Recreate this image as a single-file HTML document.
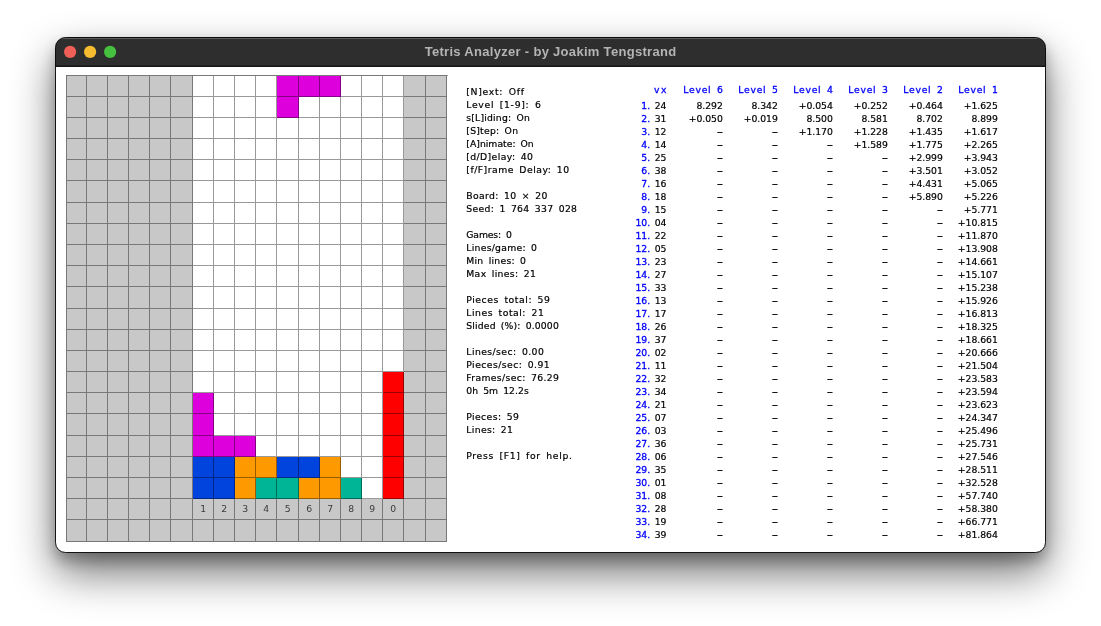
<!DOCTYPE html>
<html lang="en"><head><meta charset="utf-8"><title>Tetris Analyzer - by Joakim Tengstrand</title>
<style>
html,body{margin:0;padding:0;background:#fff;}
body{width:1101px;height:626px;overflow:hidden;position:relative;}
svg{position:absolute;left:0;top:0;display:block;will-change:transform;}
.t{font-family:"DejaVu Sans","Liberation Sans",sans-serif;font-size:9.25px;fill:#000;stroke:#000;stroke-width:0.2px;font-variant-ligatures:none;}
.b{fill:#0000ff;stroke:#0000ff;stroke-width:0.3px;}
.w{word-spacing:2px;}
.n{fill:#3a3a3a;stroke:none;}
.title{font-family:"Liberation Sans",sans-serif;font-weight:bold;font-size:13px;fill:#b4b4b4;}
</style></head><body>
<svg width="1101" height="626" viewBox="0 0 1101 626">
<defs>
<filter id="sh" x="-20%" y="-30%" width="140%" height="170%"><feGaussianBlur stdDeviation="22"/></filter>
<filter id="sh2" x="-10%" y="-10%" width="120%" height="120%"><feGaussianBlur stdDeviation="7"/></filter>
<clipPath id="win"><rect x="55.5" y="37.5" width="990" height="515" rx="10" ry="10"/></clipPath>
</defs>
<rect x="55" y="57" width="991" height="516" rx="10" fill="#000" opacity="0.55" filter="url(#sh)"/>
<rect x="55" y="45" width="991" height="516" rx="10" fill="#000" opacity="0.25" filter="url(#sh2)"/>
<rect x="55.5" y="37.5" width="990" height="515" rx="10" ry="10" fill="#fff"/>
<g clip-path="url(#win)">
<rect x="50" y="30" width="1000" height="36.5" fill="#2e2e2e"/>
<rect x="50" y="38" width="1000" height="1" fill="#fff" opacity="0.22"/>
<rect x="50" y="65.75" width="1000" height="1.1" fill="#000"/>
</g>
<rect x="55.5" y="37.5" width="990" height="515" rx="10" ry="10" fill="none" stroke="#000" stroke-opacity="0.9" stroke-width="1"/>
<circle cx="70.1" cy="51.9" r="6.1" fill="#ee5f57"/>
<circle cx="90.1" cy="51.9" r="6.1" fill="#f6bc30"/>
<circle cx="110.1" cy="51.9" r="6.1" fill="#45c13f"/>
<text class="title" x="550.4" y="56.4" text-anchor="middle" textLength="251.5" lengthAdjust="spacing">Tetris Analyzer - by Joakim Tengstrand</text>
<g shape-rendering="crispEdges">
<rect x="66" y="75" width="381" height="467" fill="#c8c8c8"/>
<rect x="193" y="76" width="211" height="423" fill="#fff"/>
<rect x="277" y="76" width="22" height="21" fill="#dd00dd"/>
<rect x="299" y="76" width="21" height="21" fill="#dd00dd"/>
<rect x="320" y="76" width="21" height="21" fill="#dd00dd"/>
<rect x="277" y="97" width="22" height="21" fill="#dd00dd"/>
<rect x="383" y="372" width="21" height="21" fill="#ff0000"/>
<rect x="193" y="393" width="21" height="21" fill="#dd00dd"/>
<rect x="383" y="393" width="21" height="21" fill="#ff0000"/>
<rect x="193" y="414" width="21" height="22" fill="#dd00dd"/>
<rect x="383" y="414" width="21" height="22" fill="#ff0000"/>
<rect x="193" y="436" width="21" height="21" fill="#dd00dd"/>
<rect x="214" y="436" width="21" height="21" fill="#dd00dd"/>
<rect x="235" y="436" width="21" height="21" fill="#dd00dd"/>
<rect x="383" y="436" width="21" height="21" fill="#ff0000"/>
<rect x="193" y="457" width="21" height="21" fill="#0044dd"/>
<rect x="214" y="457" width="21" height="21" fill="#0044dd"/>
<rect x="235" y="457" width="21" height="21" fill="#ff9900"/>
<rect x="256" y="457" width="21" height="21" fill="#ff9900"/>
<rect x="277" y="457" width="22" height="21" fill="#0044dd"/>
<rect x="299" y="457" width="21" height="21" fill="#0044dd"/>
<rect x="320" y="457" width="21" height="21" fill="#ff9900"/>
<rect x="383" y="457" width="21" height="21" fill="#ff0000"/>
<rect x="193" y="478" width="21" height="21" fill="#0044dd"/>
<rect x="214" y="478" width="21" height="21" fill="#0044dd"/>
<rect x="235" y="478" width="21" height="21" fill="#ff9900"/>
<rect x="256" y="478" width="21" height="21" fill="#00b496"/>
<rect x="277" y="478" width="22" height="21" fill="#00b496"/>
<rect x="299" y="478" width="21" height="21" fill="#ff9900"/>
<rect x="320" y="478" width="21" height="21" fill="#ff9900"/>
<rect x="341" y="478" width="21" height="21" fill="#00b496"/>
<rect x="383" y="478" width="21" height="21" fill="#ff0000"/>
<path fill="#000" fill-opacity="0.4" d="M66 75h1v467h-1zM86 75h1v467h-1zM107 75h1v467h-1zM128 75h1v467h-1zM149 75h1v467h-1zM170 75h1v467h-1zM192 75h1v467h-1zM213 75h1v467h-1zM234 75h1v467h-1zM255 75h1v467h-1zM276 75h1v467h-1zM298 75h1v467h-1zM319 75h1v467h-1zM340 75h1v467h-1zM361 75h1v467h-1zM382 75h1v467h-1zM403 75h1v467h-1zM425 75h1v467h-1zM446 75h1v467h-1zM447 75h1v1h-1z"/>
<path fill="#000" fill-opacity="0.4" d="M67 75h19v1h-19zM87 75h20v1h-20zM108 75h20v1h-20zM129 75h20v1h-20zM150 75h20v1h-20zM171 75h21v1h-21zM193 75h20v1h-20zM214 75h20v1h-20zM235 75h20v1h-20zM256 75h20v1h-20zM277 75h21v1h-21zM299 75h20v1h-20zM320 75h20v1h-20zM341 75h20v1h-20zM362 75h20v1h-20zM383 75h20v1h-20zM404 75h21v1h-21zM426 75h20v1h-20zM67 96h19v1h-19zM87 96h20v1h-20zM108 96h20v1h-20zM129 96h20v1h-20zM150 96h20v1h-20zM171 96h21v1h-21zM193 96h20v1h-20zM214 96h20v1h-20zM235 96h20v1h-20zM256 96h20v1h-20zM277 96h21v1h-21zM299 96h20v1h-20zM320 96h20v1h-20zM341 96h20v1h-20zM362 96h20v1h-20zM383 96h20v1h-20zM404 96h21v1h-21zM426 96h20v1h-20zM67 117h19v1h-19zM87 117h20v1h-20zM108 117h20v1h-20zM129 117h20v1h-20zM150 117h20v1h-20zM171 117h21v1h-21zM193 117h20v1h-20zM214 117h20v1h-20zM235 117h20v1h-20zM256 117h20v1h-20zM277 117h21v1h-21zM299 117h20v1h-20zM320 117h20v1h-20zM341 117h20v1h-20zM362 117h20v1h-20zM383 117h20v1h-20zM404 117h21v1h-21zM426 117h20v1h-20zM67 138h19v1h-19zM87 138h20v1h-20zM108 138h20v1h-20zM129 138h20v1h-20zM150 138h20v1h-20zM171 138h21v1h-21zM193 138h20v1h-20zM214 138h20v1h-20zM235 138h20v1h-20zM256 138h20v1h-20zM277 138h21v1h-21zM299 138h20v1h-20zM320 138h20v1h-20zM341 138h20v1h-20zM362 138h20v1h-20zM383 138h20v1h-20zM404 138h21v1h-21zM426 138h20v1h-20zM67 159h19v1h-19zM87 159h20v1h-20zM108 159h20v1h-20zM129 159h20v1h-20zM150 159h20v1h-20zM171 159h21v1h-21zM193 159h20v1h-20zM214 159h20v1h-20zM235 159h20v1h-20zM256 159h20v1h-20zM277 159h21v1h-21zM299 159h20v1h-20zM320 159h20v1h-20zM341 159h20v1h-20zM362 159h20v1h-20zM383 159h20v1h-20zM404 159h21v1h-21zM426 159h20v1h-20zM67 180h19v1h-19zM87 180h20v1h-20zM108 180h20v1h-20zM129 180h20v1h-20zM150 180h20v1h-20zM171 180h21v1h-21zM193 180h20v1h-20zM214 180h20v1h-20zM235 180h20v1h-20zM256 180h20v1h-20zM277 180h21v1h-21zM299 180h20v1h-20zM320 180h20v1h-20zM341 180h20v1h-20zM362 180h20v1h-20zM383 180h20v1h-20zM404 180h21v1h-21zM426 180h20v1h-20zM67 202h19v1h-19zM87 202h20v1h-20zM108 202h20v1h-20zM129 202h20v1h-20zM150 202h20v1h-20zM171 202h21v1h-21zM193 202h20v1h-20zM214 202h20v1h-20zM235 202h20v1h-20zM256 202h20v1h-20zM277 202h21v1h-21zM299 202h20v1h-20zM320 202h20v1h-20zM341 202h20v1h-20zM362 202h20v1h-20zM383 202h20v1h-20zM404 202h21v1h-21zM426 202h20v1h-20zM67 223h19v1h-19zM87 223h20v1h-20zM108 223h20v1h-20zM129 223h20v1h-20zM150 223h20v1h-20zM171 223h21v1h-21zM193 223h20v1h-20zM214 223h20v1h-20zM235 223h20v1h-20zM256 223h20v1h-20zM277 223h21v1h-21zM299 223h20v1h-20zM320 223h20v1h-20zM341 223h20v1h-20zM362 223h20v1h-20zM383 223h20v1h-20zM404 223h21v1h-21zM426 223h20v1h-20zM67 244h19v1h-19zM87 244h20v1h-20zM108 244h20v1h-20zM129 244h20v1h-20zM150 244h20v1h-20zM171 244h21v1h-21zM193 244h20v1h-20zM214 244h20v1h-20zM235 244h20v1h-20zM256 244h20v1h-20zM277 244h21v1h-21zM299 244h20v1h-20zM320 244h20v1h-20zM341 244h20v1h-20zM362 244h20v1h-20zM383 244h20v1h-20zM404 244h21v1h-21zM426 244h20v1h-20zM67 265h19v1h-19zM87 265h20v1h-20zM108 265h20v1h-20zM129 265h20v1h-20zM150 265h20v1h-20zM171 265h21v1h-21zM193 265h20v1h-20zM214 265h20v1h-20zM235 265h20v1h-20zM256 265h20v1h-20zM277 265h21v1h-21zM299 265h20v1h-20zM320 265h20v1h-20zM341 265h20v1h-20zM362 265h20v1h-20zM383 265h20v1h-20zM404 265h21v1h-21zM426 265h20v1h-20zM67 286h19v1h-19zM87 286h20v1h-20zM108 286h20v1h-20zM129 286h20v1h-20zM150 286h20v1h-20zM171 286h21v1h-21zM193 286h20v1h-20zM214 286h20v1h-20zM235 286h20v1h-20zM256 286h20v1h-20zM277 286h21v1h-21zM299 286h20v1h-20zM320 286h20v1h-20zM341 286h20v1h-20zM362 286h20v1h-20zM383 286h20v1h-20zM404 286h21v1h-21zM426 286h20v1h-20zM67 308h19v1h-19zM87 308h20v1h-20zM108 308h20v1h-20zM129 308h20v1h-20zM150 308h20v1h-20zM171 308h21v1h-21zM193 308h20v1h-20zM214 308h20v1h-20zM235 308h20v1h-20zM256 308h20v1h-20zM277 308h21v1h-21zM299 308h20v1h-20zM320 308h20v1h-20zM341 308h20v1h-20zM362 308h20v1h-20zM383 308h20v1h-20zM404 308h21v1h-21zM426 308h20v1h-20zM67 329h19v1h-19zM87 329h20v1h-20zM108 329h20v1h-20zM129 329h20v1h-20zM150 329h20v1h-20zM171 329h21v1h-21zM193 329h20v1h-20zM214 329h20v1h-20zM235 329h20v1h-20zM256 329h20v1h-20zM277 329h21v1h-21zM299 329h20v1h-20zM320 329h20v1h-20zM341 329h20v1h-20zM362 329h20v1h-20zM383 329h20v1h-20zM404 329h21v1h-21zM426 329h20v1h-20zM67 350h19v1h-19zM87 350h20v1h-20zM108 350h20v1h-20zM129 350h20v1h-20zM150 350h20v1h-20zM171 350h21v1h-21zM193 350h20v1h-20zM214 350h20v1h-20zM235 350h20v1h-20zM256 350h20v1h-20zM277 350h21v1h-21zM299 350h20v1h-20zM320 350h20v1h-20zM341 350h20v1h-20zM362 350h20v1h-20zM383 350h20v1h-20zM404 350h21v1h-21zM426 350h20v1h-20zM67 371h19v1h-19zM87 371h20v1h-20zM108 371h20v1h-20zM129 371h20v1h-20zM150 371h20v1h-20zM171 371h21v1h-21zM193 371h20v1h-20zM214 371h20v1h-20zM235 371h20v1h-20zM256 371h20v1h-20zM277 371h21v1h-21zM299 371h20v1h-20zM320 371h20v1h-20zM341 371h20v1h-20zM362 371h20v1h-20zM383 371h20v1h-20zM404 371h21v1h-21zM426 371h20v1h-20zM67 392h19v1h-19zM87 392h20v1h-20zM108 392h20v1h-20zM129 392h20v1h-20zM150 392h20v1h-20zM171 392h21v1h-21zM193 392h20v1h-20zM214 392h20v1h-20zM235 392h20v1h-20zM256 392h20v1h-20zM277 392h21v1h-21zM299 392h20v1h-20zM320 392h20v1h-20zM341 392h20v1h-20zM362 392h20v1h-20zM383 392h20v1h-20zM404 392h21v1h-21zM426 392h20v1h-20zM67 413h19v1h-19zM87 413h20v1h-20zM108 413h20v1h-20zM129 413h20v1h-20zM150 413h20v1h-20zM171 413h21v1h-21zM193 413h20v1h-20zM214 413h20v1h-20zM235 413h20v1h-20zM256 413h20v1h-20zM277 413h21v1h-21zM299 413h20v1h-20zM320 413h20v1h-20zM341 413h20v1h-20zM362 413h20v1h-20zM383 413h20v1h-20zM404 413h21v1h-21zM426 413h20v1h-20zM67 435h19v1h-19zM87 435h20v1h-20zM108 435h20v1h-20zM129 435h20v1h-20zM150 435h20v1h-20zM171 435h21v1h-21zM193 435h20v1h-20zM214 435h20v1h-20zM235 435h20v1h-20zM256 435h20v1h-20zM277 435h21v1h-21zM299 435h20v1h-20zM320 435h20v1h-20zM341 435h20v1h-20zM362 435h20v1h-20zM383 435h20v1h-20zM404 435h21v1h-21zM426 435h20v1h-20zM67 456h19v1h-19zM87 456h20v1h-20zM108 456h20v1h-20zM129 456h20v1h-20zM150 456h20v1h-20zM171 456h21v1h-21zM193 456h20v1h-20zM214 456h20v1h-20zM235 456h20v1h-20zM256 456h20v1h-20zM277 456h21v1h-21zM299 456h20v1h-20zM320 456h20v1h-20zM341 456h20v1h-20zM362 456h20v1h-20zM383 456h20v1h-20zM404 456h21v1h-21zM426 456h20v1h-20zM67 477h19v1h-19zM87 477h20v1h-20zM108 477h20v1h-20zM129 477h20v1h-20zM150 477h20v1h-20zM171 477h21v1h-21zM193 477h20v1h-20zM214 477h20v1h-20zM235 477h20v1h-20zM256 477h20v1h-20zM277 477h21v1h-21zM299 477h20v1h-20zM320 477h20v1h-20zM341 477h20v1h-20zM362 477h20v1h-20zM383 477h20v1h-20zM404 477h21v1h-21zM426 477h20v1h-20zM67 498h19v1h-19zM87 498h20v1h-20zM108 498h20v1h-20zM129 498h20v1h-20zM150 498h20v1h-20zM171 498h21v1h-21zM193 498h20v1h-20zM214 498h20v1h-20zM235 498h20v1h-20zM256 498h20v1h-20zM277 498h21v1h-21zM299 498h20v1h-20zM320 498h20v1h-20zM341 498h20v1h-20zM362 498h20v1h-20zM383 498h20v1h-20zM404 498h21v1h-21zM426 498h20v1h-20zM67 519h19v1h-19zM87 519h20v1h-20zM108 519h20v1h-20zM129 519h20v1h-20zM150 519h20v1h-20zM171 519h21v1h-21zM193 519h20v1h-20zM214 519h20v1h-20zM235 519h20v1h-20zM256 519h20v1h-20zM277 519h21v1h-21zM299 519h20v1h-20zM320 519h20v1h-20zM341 519h20v1h-20zM362 519h20v1h-20zM383 519h20v1h-20zM404 519h21v1h-21zM426 519h20v1h-20zM67 541h19v1h-19zM87 541h20v1h-20zM108 541h20v1h-20zM129 541h20v1h-20zM150 541h20v1h-20zM171 541h21v1h-21zM193 541h20v1h-20zM214 541h20v1h-20zM235 541h20v1h-20zM256 541h20v1h-20zM277 541h21v1h-21zM299 541h20v1h-20zM320 541h20v1h-20zM341 541h20v1h-20zM362 541h20v1h-20zM383 541h20v1h-20zM404 541h21v1h-21zM426 541h20v1h-20z"/>
</g>
<text class="t n" x="203.3" y="512" text-anchor="middle">1</text>
<text class="t n" x="224.3" y="512" text-anchor="middle">2</text>
<text class="t n" x="245.3" y="512" text-anchor="middle">3</text>
<text class="t n" x="266.3" y="512" text-anchor="middle">4</text>
<text class="t n" x="287.8" y="512" text-anchor="middle">5</text>
<text class="t n" x="309.3" y="512" text-anchor="middle">6</text>
<text class="t n" x="330.3" y="512" text-anchor="middle">7</text>
<text class="t n" x="351.3" y="512" text-anchor="middle">8</text>
<text class="t n" x="372.3" y="512" text-anchor="middle">9</text>
<text class="t n" x="393.3" y="512" text-anchor="middle">0</text>
<text class="t w" x="466.3" y="95" textLength="57.7" lengthAdjust="spacing" xml:space="preserve">[N]ext: Off</text>
<text class="t w" x="466.3" y="108" textLength="74.5" lengthAdjust="spacing" xml:space="preserve">Level [1-9]: 6</text>
<text class="t w" x="466.3" y="121" textLength="63.5" lengthAdjust="spacing" xml:space="preserve">s[L]iding: On</text>
<text class="t w" x="466.3" y="134" textLength="51.7" lengthAdjust="spacing" xml:space="preserve">[S]tep: On</text>
<text class="t w" x="466.3" y="147" textLength="67.4" lengthAdjust="spacing" xml:space="preserve">[A]nimate: On</text>
<text class="t w" x="466.3" y="160" textLength="66.7" lengthAdjust="spacing" xml:space="preserve">[d/D]elay: 40</text>
<text class="t w" x="466.3" y="173" textLength="102.8" lengthAdjust="spacing" xml:space="preserve">[f/F]rame Delay: 10</text>
<text class="t w" x="466.3" y="199" textLength="81" lengthAdjust="spacing" xml:space="preserve">Board: 10 × 20</text>
<text class="t w" x="466.3" y="212" textLength="110.7" lengthAdjust="spacing" xml:space="preserve">Seed: 1 764 337 028</text>
<text class="t w" x="466.3" y="238" textLength="45.5" lengthAdjust="spacing" xml:space="preserve">Games: 0</text>
<text class="t w" x="466.3" y="251" textLength="70.6" lengthAdjust="spacing" xml:space="preserve">Lines/game: 0</text>
<text class="t w" x="466.3" y="264" textLength="59.7" lengthAdjust="spacing" xml:space="preserve">Min lines: 0</text>
<text class="t w" x="466.3" y="277" textLength="69.6" lengthAdjust="spacing" xml:space="preserve">Max lines: 21</text>
<text class="t w" x="466.3" y="303" textLength="83.6" lengthAdjust="spacing" xml:space="preserve">Pieces total: 59</text>
<text class="t w" x="466.3" y="316" textLength="77.5" lengthAdjust="spacing" xml:space="preserve">Lines total: 21</text>
<text class="t w" x="466.3" y="329" textLength="92.5" lengthAdjust="spacing" xml:space="preserve">Slided (%): 0.0000</text>
<text class="t w" x="466.3" y="355" textLength="77.5" lengthAdjust="spacing" xml:space="preserve">Lines/sec: 0.00</text>
<text class="t w" x="466.3" y="368" textLength="83.3" lengthAdjust="spacing" xml:space="preserve">Pieces/sec: 0.91</text>
<text class="t w" x="466.3" y="381" textLength="92.5" lengthAdjust="spacing" xml:space="preserve">Frames/sec: 76.29</text>
<text class="t w" x="466.3" y="394" textLength="62.5" lengthAdjust="spacing" xml:space="preserve">0h 5m 12.2s</text>
<text class="t w" x="466.3" y="420" textLength="52.6" lengthAdjust="spacing" xml:space="preserve">Pieces: 59</text>
<text class="t w" x="466.3" y="433" textLength="46.6" lengthAdjust="spacing" xml:space="preserve">Lines: 21</text>
<text class="t w" x="466.3" y="459" textLength="105.6" lengthAdjust="spacing" xml:space="preserve">Press [F1] for help.</text>
<text class="t b" x="666.4" y="93.2" text-anchor="end" textLength="12.3" lengthAdjust="spacing">vx</text>
<text class="t b w" x="722.9" y="93.2" text-anchor="end" textLength="39.6" lengthAdjust="spacing" xml:space="preserve">Level 6</text>
<text class="t b w" x="777.9" y="93.2" text-anchor="end" textLength="39.6" lengthAdjust="spacing" xml:space="preserve">Level 5</text>
<text class="t b w" x="832.9" y="93.2" text-anchor="end" textLength="39.6" lengthAdjust="spacing" xml:space="preserve">Level 4</text>
<text class="t b w" x="887.9" y="93.2" text-anchor="end" textLength="39.6" lengthAdjust="spacing" xml:space="preserve">Level 3</text>
<text class="t b w" x="942.9" y="93.2" text-anchor="end" textLength="39.6" lengthAdjust="spacing" xml:space="preserve">Level 2</text>
<text class="t b w" x="997.9" y="93.2" text-anchor="end" textLength="39.6" lengthAdjust="spacing" xml:space="preserve">Level 1</text>
<text class="t b" x="650.2" y="108.6" text-anchor="end">1.</text>
<text class="t" x="666.5" y="108.6" text-anchor="end">24</text>
<text class="t" x="722.9" y="108.6" text-anchor="end">8.292</text>
<text class="t" x="777.9" y="108.6" text-anchor="end">8.342</text>
<text class="t" x="832.9" y="108.6" text-anchor="end">+0.054</text>
<text class="t" x="887.9" y="108.6" text-anchor="end">+0.252</text>
<text class="t" x="942.9" y="108.6" text-anchor="end">+0.464</text>
<text class="t" x="997.9" y="108.6" text-anchor="end">+1.625</text>
<text class="t b" x="650.2" y="121.6" text-anchor="end">2.</text>
<text class="t" x="666.5" y="121.6" text-anchor="end">31</text>
<text class="t" x="722.9" y="121.6" text-anchor="end">+0.050</text>
<text class="t" x="777.9" y="121.6" text-anchor="end">+0.019</text>
<text class="t" x="832.9" y="121.6" text-anchor="end">8.500</text>
<text class="t" x="887.9" y="121.6" text-anchor="end">8.581</text>
<text class="t" x="942.9" y="121.6" text-anchor="end">8.702</text>
<text class="t" x="997.9" y="121.6" text-anchor="end">8.899</text>
<text class="t b" x="650.2" y="134.6" text-anchor="end">3.</text>
<text class="t" x="666.5" y="134.6" text-anchor="end">12</text>
<text class="t" transform="translate(723.1,135.2) scale(1.9,1.15)" text-anchor="end">-</text>
<text class="t" transform="translate(778.1,135.2) scale(1.9,1.15)" text-anchor="end">-</text>
<text class="t" x="832.9" y="134.6" text-anchor="end">+1.170</text>
<text class="t" x="887.9" y="134.6" text-anchor="end">+1.228</text>
<text class="t" x="942.9" y="134.6" text-anchor="end">+1.435</text>
<text class="t" x="997.9" y="134.6" text-anchor="end">+1.617</text>
<text class="t b" x="650.2" y="147.6" text-anchor="end">4.</text>
<text class="t" x="666.5" y="147.6" text-anchor="end">14</text>
<text class="t" transform="translate(723.1,148.2) scale(1.9,1.15)" text-anchor="end">-</text>
<text class="t" transform="translate(778.1,148.2) scale(1.9,1.15)" text-anchor="end">-</text>
<text class="t" transform="translate(833.1,148.2) scale(1.9,1.15)" text-anchor="end">-</text>
<text class="t" x="887.9" y="147.6" text-anchor="end">+1.589</text>
<text class="t" x="942.9" y="147.6" text-anchor="end">+1.775</text>
<text class="t" x="997.9" y="147.6" text-anchor="end">+2.265</text>
<text class="t b" x="650.2" y="160.6" text-anchor="end">5.</text>
<text class="t" x="666.5" y="160.6" text-anchor="end">25</text>
<text class="t" transform="translate(723.1,161.2) scale(1.9,1.15)" text-anchor="end">-</text>
<text class="t" transform="translate(778.1,161.2) scale(1.9,1.15)" text-anchor="end">-</text>
<text class="t" transform="translate(833.1,161.2) scale(1.9,1.15)" text-anchor="end">-</text>
<text class="t" transform="translate(888.1,161.2) scale(1.9,1.15)" text-anchor="end">-</text>
<text class="t" x="942.9" y="160.6" text-anchor="end">+2.999</text>
<text class="t" x="997.9" y="160.6" text-anchor="end">+3.943</text>
<text class="t b" x="650.2" y="173.6" text-anchor="end">6.</text>
<text class="t" x="666.5" y="173.6" text-anchor="end">38</text>
<text class="t" transform="translate(723.1,174.2) scale(1.9,1.15)" text-anchor="end">-</text>
<text class="t" transform="translate(778.1,174.2) scale(1.9,1.15)" text-anchor="end">-</text>
<text class="t" transform="translate(833.1,174.2) scale(1.9,1.15)" text-anchor="end">-</text>
<text class="t" transform="translate(888.1,174.2) scale(1.9,1.15)" text-anchor="end">-</text>
<text class="t" x="942.9" y="173.6" text-anchor="end">+3.501</text>
<text class="t" x="997.9" y="173.6" text-anchor="end">+3.052</text>
<text class="t b" x="650.2" y="186.6" text-anchor="end">7.</text>
<text class="t" x="666.5" y="186.6" text-anchor="end">16</text>
<text class="t" transform="translate(723.1,187.2) scale(1.9,1.15)" text-anchor="end">-</text>
<text class="t" transform="translate(778.1,187.2) scale(1.9,1.15)" text-anchor="end">-</text>
<text class="t" transform="translate(833.1,187.2) scale(1.9,1.15)" text-anchor="end">-</text>
<text class="t" transform="translate(888.1,187.2) scale(1.9,1.15)" text-anchor="end">-</text>
<text class="t" x="942.9" y="186.6" text-anchor="end">+4.431</text>
<text class="t" x="997.9" y="186.6" text-anchor="end">+5.065</text>
<text class="t b" x="650.2" y="199.6" text-anchor="end">8.</text>
<text class="t" x="666.5" y="199.6" text-anchor="end">18</text>
<text class="t" transform="translate(723.1,200.2) scale(1.9,1.15)" text-anchor="end">-</text>
<text class="t" transform="translate(778.1,200.2) scale(1.9,1.15)" text-anchor="end">-</text>
<text class="t" transform="translate(833.1,200.2) scale(1.9,1.15)" text-anchor="end">-</text>
<text class="t" transform="translate(888.1,200.2) scale(1.9,1.15)" text-anchor="end">-</text>
<text class="t" x="942.9" y="199.6" text-anchor="end">+5.890</text>
<text class="t" x="997.9" y="199.6" text-anchor="end">+5.226</text>
<text class="t b" x="650.2" y="212.6" text-anchor="end">9.</text>
<text class="t" x="666.5" y="212.6" text-anchor="end">15</text>
<text class="t" transform="translate(723.1,213.2) scale(1.9,1.15)" text-anchor="end">-</text>
<text class="t" transform="translate(778.1,213.2) scale(1.9,1.15)" text-anchor="end">-</text>
<text class="t" transform="translate(833.1,213.2) scale(1.9,1.15)" text-anchor="end">-</text>
<text class="t" transform="translate(888.1,213.2) scale(1.9,1.15)" text-anchor="end">-</text>
<text class="t" transform="translate(943.1,213.2) scale(1.9,1.15)" text-anchor="end">-</text>
<text class="t" x="997.9" y="212.6" text-anchor="end">+5.771</text>
<text class="t b" x="650.2" y="225.6" text-anchor="end">10.</text>
<text class="t" x="666.5" y="225.6" text-anchor="end">04</text>
<text class="t" transform="translate(723.1,226.2) scale(1.9,1.15)" text-anchor="end">-</text>
<text class="t" transform="translate(778.1,226.2) scale(1.9,1.15)" text-anchor="end">-</text>
<text class="t" transform="translate(833.1,226.2) scale(1.9,1.15)" text-anchor="end">-</text>
<text class="t" transform="translate(888.1,226.2) scale(1.9,1.15)" text-anchor="end">-</text>
<text class="t" transform="translate(943.1,226.2) scale(1.9,1.15)" text-anchor="end">-</text>
<text class="t" x="997.9" y="225.6" text-anchor="end">+10.815</text>
<text class="t b" x="650.2" y="238.6" text-anchor="end">11.</text>
<text class="t" x="666.5" y="238.6" text-anchor="end">22</text>
<text class="t" transform="translate(723.1,239.2) scale(1.9,1.15)" text-anchor="end">-</text>
<text class="t" transform="translate(778.1,239.2) scale(1.9,1.15)" text-anchor="end">-</text>
<text class="t" transform="translate(833.1,239.2) scale(1.9,1.15)" text-anchor="end">-</text>
<text class="t" transform="translate(888.1,239.2) scale(1.9,1.15)" text-anchor="end">-</text>
<text class="t" transform="translate(943.1,239.2) scale(1.9,1.15)" text-anchor="end">-</text>
<text class="t" x="997.9" y="238.6" text-anchor="end">+11.870</text>
<text class="t b" x="650.2" y="251.6" text-anchor="end">12.</text>
<text class="t" x="666.5" y="251.6" text-anchor="end">05</text>
<text class="t" transform="translate(723.1,252.2) scale(1.9,1.15)" text-anchor="end">-</text>
<text class="t" transform="translate(778.1,252.2) scale(1.9,1.15)" text-anchor="end">-</text>
<text class="t" transform="translate(833.1,252.2) scale(1.9,1.15)" text-anchor="end">-</text>
<text class="t" transform="translate(888.1,252.2) scale(1.9,1.15)" text-anchor="end">-</text>
<text class="t" transform="translate(943.1,252.2) scale(1.9,1.15)" text-anchor="end">-</text>
<text class="t" x="997.9" y="251.6" text-anchor="end">+13.908</text>
<text class="t b" x="650.2" y="264.6" text-anchor="end">13.</text>
<text class="t" x="666.5" y="264.6" text-anchor="end">23</text>
<text class="t" transform="translate(723.1,265.2) scale(1.9,1.15)" text-anchor="end">-</text>
<text class="t" transform="translate(778.1,265.2) scale(1.9,1.15)" text-anchor="end">-</text>
<text class="t" transform="translate(833.1,265.2) scale(1.9,1.15)" text-anchor="end">-</text>
<text class="t" transform="translate(888.1,265.2) scale(1.9,1.15)" text-anchor="end">-</text>
<text class="t" transform="translate(943.1,265.2) scale(1.9,1.15)" text-anchor="end">-</text>
<text class="t" x="997.9" y="264.6" text-anchor="end">+14.661</text>
<text class="t b" x="650.2" y="277.6" text-anchor="end">14.</text>
<text class="t" x="666.5" y="277.6" text-anchor="end">27</text>
<text class="t" transform="translate(723.1,278.2) scale(1.9,1.15)" text-anchor="end">-</text>
<text class="t" transform="translate(778.1,278.2) scale(1.9,1.15)" text-anchor="end">-</text>
<text class="t" transform="translate(833.1,278.2) scale(1.9,1.15)" text-anchor="end">-</text>
<text class="t" transform="translate(888.1,278.2) scale(1.9,1.15)" text-anchor="end">-</text>
<text class="t" transform="translate(943.1,278.2) scale(1.9,1.15)" text-anchor="end">-</text>
<text class="t" x="997.9" y="277.6" text-anchor="end">+15.107</text>
<text class="t b" x="650.2" y="290.6" text-anchor="end">15.</text>
<text class="t" x="666.5" y="290.6" text-anchor="end">33</text>
<text class="t" transform="translate(723.1,291.2) scale(1.9,1.15)" text-anchor="end">-</text>
<text class="t" transform="translate(778.1,291.2) scale(1.9,1.15)" text-anchor="end">-</text>
<text class="t" transform="translate(833.1,291.2) scale(1.9,1.15)" text-anchor="end">-</text>
<text class="t" transform="translate(888.1,291.2) scale(1.9,1.15)" text-anchor="end">-</text>
<text class="t" transform="translate(943.1,291.2) scale(1.9,1.15)" text-anchor="end">-</text>
<text class="t" x="997.9" y="290.6" text-anchor="end">+15.238</text>
<text class="t b" x="650.2" y="303.6" text-anchor="end">16.</text>
<text class="t" x="666.5" y="303.6" text-anchor="end">13</text>
<text class="t" transform="translate(723.1,304.2) scale(1.9,1.15)" text-anchor="end">-</text>
<text class="t" transform="translate(778.1,304.2) scale(1.9,1.15)" text-anchor="end">-</text>
<text class="t" transform="translate(833.1,304.2) scale(1.9,1.15)" text-anchor="end">-</text>
<text class="t" transform="translate(888.1,304.2) scale(1.9,1.15)" text-anchor="end">-</text>
<text class="t" transform="translate(943.1,304.2) scale(1.9,1.15)" text-anchor="end">-</text>
<text class="t" x="997.9" y="303.6" text-anchor="end">+15.926</text>
<text class="t b" x="650.2" y="316.6" text-anchor="end">17.</text>
<text class="t" x="666.5" y="316.6" text-anchor="end">17</text>
<text class="t" transform="translate(723.1,317.2) scale(1.9,1.15)" text-anchor="end">-</text>
<text class="t" transform="translate(778.1,317.2) scale(1.9,1.15)" text-anchor="end">-</text>
<text class="t" transform="translate(833.1,317.2) scale(1.9,1.15)" text-anchor="end">-</text>
<text class="t" transform="translate(888.1,317.2) scale(1.9,1.15)" text-anchor="end">-</text>
<text class="t" transform="translate(943.1,317.2) scale(1.9,1.15)" text-anchor="end">-</text>
<text class="t" x="997.9" y="316.6" text-anchor="end">+16.813</text>
<text class="t b" x="650.2" y="329.6" text-anchor="end">18.</text>
<text class="t" x="666.5" y="329.6" text-anchor="end">26</text>
<text class="t" transform="translate(723.1,330.2) scale(1.9,1.15)" text-anchor="end">-</text>
<text class="t" transform="translate(778.1,330.2) scale(1.9,1.15)" text-anchor="end">-</text>
<text class="t" transform="translate(833.1,330.2) scale(1.9,1.15)" text-anchor="end">-</text>
<text class="t" transform="translate(888.1,330.2) scale(1.9,1.15)" text-anchor="end">-</text>
<text class="t" transform="translate(943.1,330.2) scale(1.9,1.15)" text-anchor="end">-</text>
<text class="t" x="997.9" y="329.6" text-anchor="end">+18.325</text>
<text class="t b" x="650.2" y="342.6" text-anchor="end">19.</text>
<text class="t" x="666.5" y="342.6" text-anchor="end">37</text>
<text class="t" transform="translate(723.1,343.2) scale(1.9,1.15)" text-anchor="end">-</text>
<text class="t" transform="translate(778.1,343.2) scale(1.9,1.15)" text-anchor="end">-</text>
<text class="t" transform="translate(833.1,343.2) scale(1.9,1.15)" text-anchor="end">-</text>
<text class="t" transform="translate(888.1,343.2) scale(1.9,1.15)" text-anchor="end">-</text>
<text class="t" transform="translate(943.1,343.2) scale(1.9,1.15)" text-anchor="end">-</text>
<text class="t" x="997.9" y="342.6" text-anchor="end">+18.661</text>
<text class="t b" x="650.2" y="355.6" text-anchor="end">20.</text>
<text class="t" x="666.5" y="355.6" text-anchor="end">02</text>
<text class="t" transform="translate(723.1,356.2) scale(1.9,1.15)" text-anchor="end">-</text>
<text class="t" transform="translate(778.1,356.2) scale(1.9,1.15)" text-anchor="end">-</text>
<text class="t" transform="translate(833.1,356.2) scale(1.9,1.15)" text-anchor="end">-</text>
<text class="t" transform="translate(888.1,356.2) scale(1.9,1.15)" text-anchor="end">-</text>
<text class="t" transform="translate(943.1,356.2) scale(1.9,1.15)" text-anchor="end">-</text>
<text class="t" x="997.9" y="355.6" text-anchor="end">+20.666</text>
<text class="t b" x="650.2" y="368.6" text-anchor="end">21.</text>
<text class="t" x="666.5" y="368.6" text-anchor="end">11</text>
<text class="t" transform="translate(723.1,369.2) scale(1.9,1.15)" text-anchor="end">-</text>
<text class="t" transform="translate(778.1,369.2) scale(1.9,1.15)" text-anchor="end">-</text>
<text class="t" transform="translate(833.1,369.2) scale(1.9,1.15)" text-anchor="end">-</text>
<text class="t" transform="translate(888.1,369.2) scale(1.9,1.15)" text-anchor="end">-</text>
<text class="t" transform="translate(943.1,369.2) scale(1.9,1.15)" text-anchor="end">-</text>
<text class="t" x="997.9" y="368.6" text-anchor="end">+21.504</text>
<text class="t b" x="650.2" y="381.6" text-anchor="end">22.</text>
<text class="t" x="666.5" y="381.6" text-anchor="end">32</text>
<text class="t" transform="translate(723.1,382.2) scale(1.9,1.15)" text-anchor="end">-</text>
<text class="t" transform="translate(778.1,382.2) scale(1.9,1.15)" text-anchor="end">-</text>
<text class="t" transform="translate(833.1,382.2) scale(1.9,1.15)" text-anchor="end">-</text>
<text class="t" transform="translate(888.1,382.2) scale(1.9,1.15)" text-anchor="end">-</text>
<text class="t" transform="translate(943.1,382.2) scale(1.9,1.15)" text-anchor="end">-</text>
<text class="t" x="997.9" y="381.6" text-anchor="end">+23.583</text>
<text class="t b" x="650.2" y="394.6" text-anchor="end">23.</text>
<text class="t" x="666.5" y="394.6" text-anchor="end">34</text>
<text class="t" transform="translate(723.1,395.2) scale(1.9,1.15)" text-anchor="end">-</text>
<text class="t" transform="translate(778.1,395.2) scale(1.9,1.15)" text-anchor="end">-</text>
<text class="t" transform="translate(833.1,395.2) scale(1.9,1.15)" text-anchor="end">-</text>
<text class="t" transform="translate(888.1,395.2) scale(1.9,1.15)" text-anchor="end">-</text>
<text class="t" transform="translate(943.1,395.2) scale(1.9,1.15)" text-anchor="end">-</text>
<text class="t" x="997.9" y="394.6" text-anchor="end">+23.594</text>
<text class="t b" x="650.2" y="407.6" text-anchor="end">24.</text>
<text class="t" x="666.5" y="407.6" text-anchor="end">21</text>
<text class="t" transform="translate(723.1,408.2) scale(1.9,1.15)" text-anchor="end">-</text>
<text class="t" transform="translate(778.1,408.2) scale(1.9,1.15)" text-anchor="end">-</text>
<text class="t" transform="translate(833.1,408.2) scale(1.9,1.15)" text-anchor="end">-</text>
<text class="t" transform="translate(888.1,408.2) scale(1.9,1.15)" text-anchor="end">-</text>
<text class="t" transform="translate(943.1,408.2) scale(1.9,1.15)" text-anchor="end">-</text>
<text class="t" x="997.9" y="407.6" text-anchor="end">+23.623</text>
<text class="t b" x="650.2" y="420.6" text-anchor="end">25.</text>
<text class="t" x="666.5" y="420.6" text-anchor="end">07</text>
<text class="t" transform="translate(723.1,421.2) scale(1.9,1.15)" text-anchor="end">-</text>
<text class="t" transform="translate(778.1,421.2) scale(1.9,1.15)" text-anchor="end">-</text>
<text class="t" transform="translate(833.1,421.2) scale(1.9,1.15)" text-anchor="end">-</text>
<text class="t" transform="translate(888.1,421.2) scale(1.9,1.15)" text-anchor="end">-</text>
<text class="t" transform="translate(943.1,421.2) scale(1.9,1.15)" text-anchor="end">-</text>
<text class="t" x="997.9" y="420.6" text-anchor="end">+24.347</text>
<text class="t b" x="650.2" y="433.6" text-anchor="end">26.</text>
<text class="t" x="666.5" y="433.6" text-anchor="end">03</text>
<text class="t" transform="translate(723.1,434.2) scale(1.9,1.15)" text-anchor="end">-</text>
<text class="t" transform="translate(778.1,434.2) scale(1.9,1.15)" text-anchor="end">-</text>
<text class="t" transform="translate(833.1,434.2) scale(1.9,1.15)" text-anchor="end">-</text>
<text class="t" transform="translate(888.1,434.2) scale(1.9,1.15)" text-anchor="end">-</text>
<text class="t" transform="translate(943.1,434.2) scale(1.9,1.15)" text-anchor="end">-</text>
<text class="t" x="997.9" y="433.6" text-anchor="end">+25.496</text>
<text class="t b" x="650.2" y="446.6" text-anchor="end">27.</text>
<text class="t" x="666.5" y="446.6" text-anchor="end">36</text>
<text class="t" transform="translate(723.1,447.2) scale(1.9,1.15)" text-anchor="end">-</text>
<text class="t" transform="translate(778.1,447.2) scale(1.9,1.15)" text-anchor="end">-</text>
<text class="t" transform="translate(833.1,447.2) scale(1.9,1.15)" text-anchor="end">-</text>
<text class="t" transform="translate(888.1,447.2) scale(1.9,1.15)" text-anchor="end">-</text>
<text class="t" transform="translate(943.1,447.2) scale(1.9,1.15)" text-anchor="end">-</text>
<text class="t" x="997.9" y="446.6" text-anchor="end">+25.731</text>
<text class="t b" x="650.2" y="459.6" text-anchor="end">28.</text>
<text class="t" x="666.5" y="459.6" text-anchor="end">06</text>
<text class="t" transform="translate(723.1,460.2) scale(1.9,1.15)" text-anchor="end">-</text>
<text class="t" transform="translate(778.1,460.2) scale(1.9,1.15)" text-anchor="end">-</text>
<text class="t" transform="translate(833.1,460.2) scale(1.9,1.15)" text-anchor="end">-</text>
<text class="t" transform="translate(888.1,460.2) scale(1.9,1.15)" text-anchor="end">-</text>
<text class="t" transform="translate(943.1,460.2) scale(1.9,1.15)" text-anchor="end">-</text>
<text class="t" x="997.9" y="459.6" text-anchor="end">+27.546</text>
<text class="t b" x="650.2" y="472.6" text-anchor="end">29.</text>
<text class="t" x="666.5" y="472.6" text-anchor="end">35</text>
<text class="t" transform="translate(723.1,473.2) scale(1.9,1.15)" text-anchor="end">-</text>
<text class="t" transform="translate(778.1,473.2) scale(1.9,1.15)" text-anchor="end">-</text>
<text class="t" transform="translate(833.1,473.2) scale(1.9,1.15)" text-anchor="end">-</text>
<text class="t" transform="translate(888.1,473.2) scale(1.9,1.15)" text-anchor="end">-</text>
<text class="t" transform="translate(943.1,473.2) scale(1.9,1.15)" text-anchor="end">-</text>
<text class="t" x="997.9" y="472.6" text-anchor="end">+28.511</text>
<text class="t b" x="650.2" y="485.6" text-anchor="end">30.</text>
<text class="t" x="666.5" y="485.6" text-anchor="end">01</text>
<text class="t" transform="translate(723.1,486.2) scale(1.9,1.15)" text-anchor="end">-</text>
<text class="t" transform="translate(778.1,486.2) scale(1.9,1.15)" text-anchor="end">-</text>
<text class="t" transform="translate(833.1,486.2) scale(1.9,1.15)" text-anchor="end">-</text>
<text class="t" transform="translate(888.1,486.2) scale(1.9,1.15)" text-anchor="end">-</text>
<text class="t" transform="translate(943.1,486.2) scale(1.9,1.15)" text-anchor="end">-</text>
<text class="t" x="997.9" y="485.6" text-anchor="end">+32.528</text>
<text class="t b" x="650.2" y="498.6" text-anchor="end">31.</text>
<text class="t" x="666.5" y="498.6" text-anchor="end">08</text>
<text class="t" transform="translate(723.1,499.2) scale(1.9,1.15)" text-anchor="end">-</text>
<text class="t" transform="translate(778.1,499.2) scale(1.9,1.15)" text-anchor="end">-</text>
<text class="t" transform="translate(833.1,499.2) scale(1.9,1.15)" text-anchor="end">-</text>
<text class="t" transform="translate(888.1,499.2) scale(1.9,1.15)" text-anchor="end">-</text>
<text class="t" transform="translate(943.1,499.2) scale(1.9,1.15)" text-anchor="end">-</text>
<text class="t" x="997.9" y="498.6" text-anchor="end">+57.740</text>
<text class="t b" x="650.2" y="511.6" text-anchor="end">32.</text>
<text class="t" x="666.5" y="511.6" text-anchor="end">28</text>
<text class="t" transform="translate(723.1,512.2) scale(1.9,1.15)" text-anchor="end">-</text>
<text class="t" transform="translate(778.1,512.2) scale(1.9,1.15)" text-anchor="end">-</text>
<text class="t" transform="translate(833.1,512.2) scale(1.9,1.15)" text-anchor="end">-</text>
<text class="t" transform="translate(888.1,512.2) scale(1.9,1.15)" text-anchor="end">-</text>
<text class="t" transform="translate(943.1,512.2) scale(1.9,1.15)" text-anchor="end">-</text>
<text class="t" x="997.9" y="511.6" text-anchor="end">+58.380</text>
<text class="t b" x="650.2" y="524.6" text-anchor="end">33.</text>
<text class="t" x="666.5" y="524.6" text-anchor="end">19</text>
<text class="t" transform="translate(723.1,525.2) scale(1.9,1.15)" text-anchor="end">-</text>
<text class="t" transform="translate(778.1,525.2) scale(1.9,1.15)" text-anchor="end">-</text>
<text class="t" transform="translate(833.1,525.2) scale(1.9,1.15)" text-anchor="end">-</text>
<text class="t" transform="translate(888.1,525.2) scale(1.9,1.15)" text-anchor="end">-</text>
<text class="t" transform="translate(943.1,525.2) scale(1.9,1.15)" text-anchor="end">-</text>
<text class="t" x="997.9" y="524.6" text-anchor="end">+66.771</text>
<text class="t b" x="650.2" y="537.6" text-anchor="end">34.</text>
<text class="t" x="666.5" y="537.6" text-anchor="end">39</text>
<text class="t" transform="translate(723.1,538.2) scale(1.9,1.15)" text-anchor="end">-</text>
<text class="t" transform="translate(778.1,538.2) scale(1.9,1.15)" text-anchor="end">-</text>
<text class="t" transform="translate(833.1,538.2) scale(1.9,1.15)" text-anchor="end">-</text>
<text class="t" transform="translate(888.1,538.2) scale(1.9,1.15)" text-anchor="end">-</text>
<text class="t" transform="translate(943.1,538.2) scale(1.9,1.15)" text-anchor="end">-</text>
<text class="t" x="997.9" y="537.6" text-anchor="end">+81.864</text>
</svg>
</body></html>
